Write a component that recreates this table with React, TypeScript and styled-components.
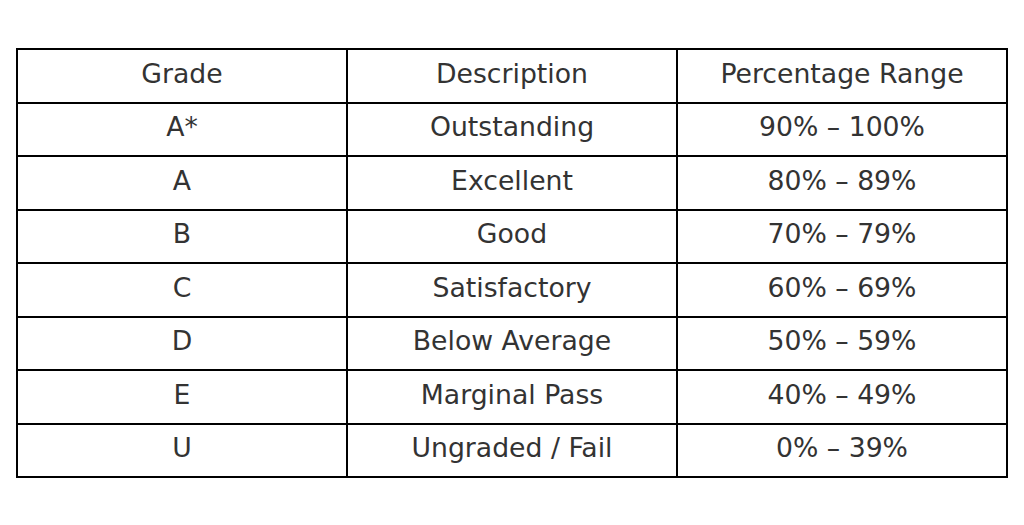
import React from "react";
import styled, { createGlobalStyle } from "styled-components";

const Global = createGlobalStyle`
  html, body { margin: 0; padding: 0; background: #ffffff; }
  body { font-family: "DejaVu Sans", sans-serif; }
`;

const Page = styled.div`
  padding: 48px 16px 0 16px;
`;

const Table = styled.table`
  width: 992px;
  border-collapse: collapse;
  table-layout: fixed;
`;

const Row = styled.tr`
  height: 53.5px;
`;

const Cell = styled.td`
  border: 2px solid #000;
  padding: 0 0 3px 0;
  text-align: center;
  vertical-align: middle;
  font-size: 26.7px;
  line-height: 1;
  color: #333333;
  font-family: "DejaVu Sans", sans-serif;
`;

const rows = [
  ["Grade", "Description", "Percentage Range"],
  ["A*", "Outstanding", "90% – 100%"],
  ["A", "Excellent", "80% – 89%"],
  ["B", "Good", "70% – 79%"],
  ["C", "Satisfactory", "60% – 69%"],
  ["D", "Below Average", "50% – 59%"],
  ["E", "Marginal Pass", "40% – 49%"],
  ["U", "Ungraded / Fail", "0% – 39%"],
];

export default function App() {
  return (
    <>
      <Global />
      <Page>
        <Table>
          <tbody>
            {rows.map((r, i) => (
              <Row key={i}>
                {r.map((c, j) => (
                  <Cell key={j}>{c}</Cell>
                ))}
              </Row>
            ))}
          </tbody>
        </Table>
      </Page>
    </>
  );
}
